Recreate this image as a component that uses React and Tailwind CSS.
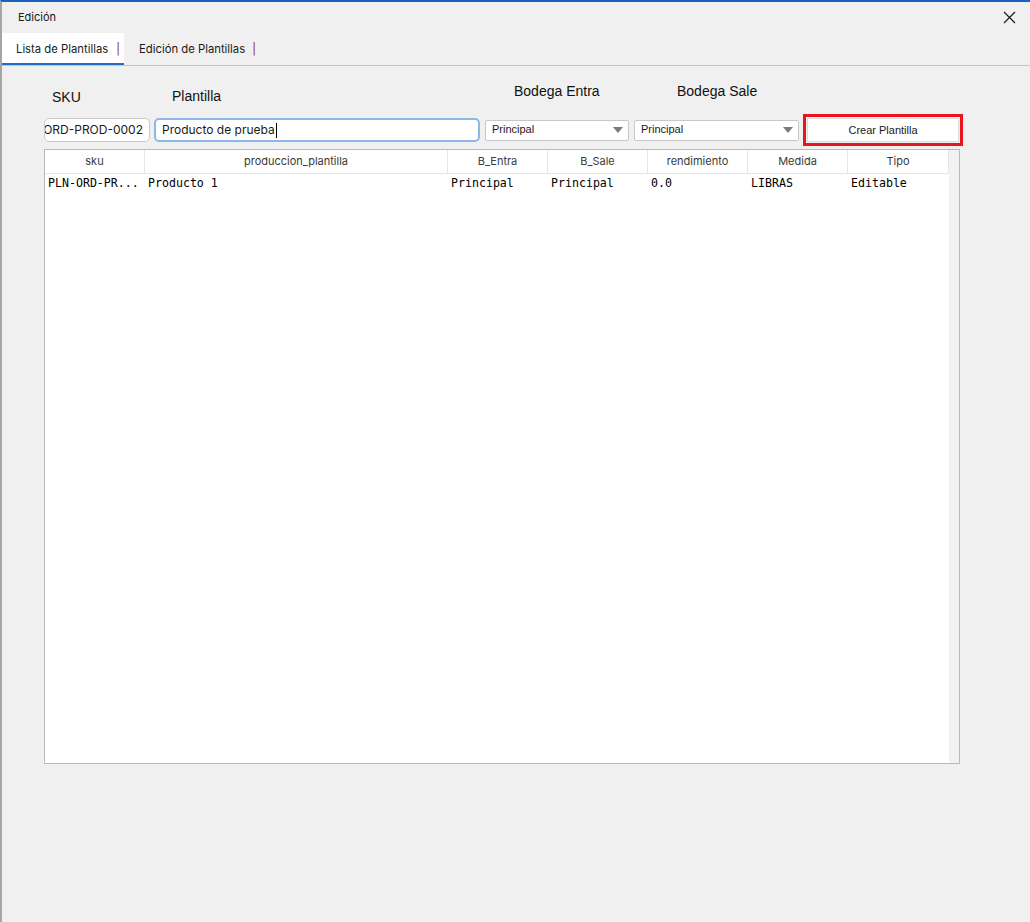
import React from "react";

const columnas = [
  { key: "sku", label: "sku", w: "w-[100px]" },
  { key: "plantilla", label: "produccion_plantilla", w: "w-[303px]" },
  { key: "entra", label: "B_Entra", w: "w-[100px]" },
  { key: "sale", label: "B_Sale", w: "w-[100px]" },
  { key: "rend", label: "rendimiento", w: "w-[100px]" },
  { key: "medida", label: "Medida", w: "w-[100px]" },
  { key: "tipo", label: "Tipo", w: "w-[101px]" },
];

const filas = [
  {
    sku: "PLN-ORD-PR...",
    plantilla: "Producto 1",
    entra: "Principal",
    sale: "Principal",
    rend: "0.0",
    medida: "LIBRAS",
    tipo: "Editable",
  },
];

function SelectBodega({ width }) {
  return (
    <div
      className={`${width} h-[21px] bg-white border border-[#c8c8c8] rounded-[2px] flex items-center justify-between pl-[6px] pr-[5px] pb-px text-[11px] text-[#1a1a1a]`}
      style={{ fontFamily: '"Liberation Sans", Arial, sans-serif' }}
    >
      <span>Principal</span>
      <svg width="10" height="6" viewBox="0 0 10 6">
        <path d="M0 0 L10 0 L5 6 Z" fill="#7a7a7a" />
      </svg>
    </div>
  );
}

export default function App() {
  const ui = { fontFamily: 'Inter, "Open Sans", sans-serif' };
  const arial = { fontFamily: '"Liberation Sans", Arial, sans-serif' };
  const mono = { fontFamily: '"DejaVu Sans Mono", "Liberation Mono", monospace' };

  return (
    <div className="w-[1030px] h-[922px] bg-[#f0f0f0] border-t-2 border-[#1a62c0] border-l-2 border-l-[#a5a5a5] flex flex-col overflow-hidden">
      {/* barra de titulo */}
      <div className="h-[31px] flex items-center justify-between pl-4 pr-[14px]" style={ui}>
        <span className="text-[11px] text-[#1a1a1a]">Edición</span>
        <svg width="13" height="13" viewBox="0 0 13 13">
          <path d="M1 1 L12 12 M12 1 L1 12" stroke="#1a1a1a" strokeWidth="1.2" />
        </svg>
      </div>

      {/* tabs */}
      <div className="h-[33px] flex items-stretch border-b border-[#c4c4c4]" style={ui}>
        <div className="w-[122px] bg-white border-b-2 border-[#1f6fc8] flex items-center pl-[14px] pt-[2px] text-[11.3px] text-[#1a1a1a]">
          Lista de Plantillas <span className="ml-[8px] text-[#8c1d2e]">|</span>
        </div>
        <div className="flex items-center pl-[15px] text-[11.3px] text-[#1a1a1a]">
          Edición de Plantillas <span className="ml-[7px] text-[#8c1d2e]">|</span>
        </div>
      </div>

      {/* contenido */}
      <div className="pl-[42px] flex flex-col">
        <div className="h-[48px] flex text-[14px] text-[#111111]" style={arial}>
          <div className="w-[110px] pl-2 pt-[21px]">SKU</div>
          <div className="w-[331px] pl-[18px] pt-[20px]">Plantilla</div>
          <div className="w-[149px] pl-[29px] pt-[15px]">Bodega Entra</div>
          <div className="w-[169px] pl-[43px] pt-[15px]">Bodega Sale</div>
        </div>

        <div className="h-[32px] flex items-center">
          <div
            className="w-[106px] h-[24px] bg-white border border-[#c9c9c9] rounded-[5px] flex items-center justify-end pr-[6px] overflow-hidden whitespace-nowrap text-[12px] text-[#1a1a1a]"
            style={ui}
          >
            ORD-PROD-0002
          </div>
          <div
            className="ml-[4px] w-[326px] h-[24px] bg-white border-2 border-[#8bb8e8] rounded-[5px] flex items-center pl-[6px] text-[12px] text-[#1a1a1a]"
            style={ui}
          >
            Producto de prueba
            <span className="w-px h-[15px] bg-black ml-px" />
          </div>
          <div className="ml-[5px]">
            <SelectBodega width="w-[144px]" />
          </div>
          <div className="ml-[5px]">
            <SelectBodega width="w-[165px]" />
          </div>
          <div className="ml-[4px] w-[160px] h-[32px] border-[3px] border-[#e8141e] p-[1px]">
            <button
              className="w-full h-full bg-white border border-[#dcdcdc] flex items-center justify-center text-[11px] text-[#1a1a1a]"
              style={arial}
            >
              Crear Plantilla
            </button>
          </div>
        </div>

        {/* tabla */}
        <div className="mt-[3px] w-[916px] h-[615px] border border-[#b9b9b9] bg-white flex">
          <div className="w-[904px] flex flex-col">
            <div className="h-[24px] flex border-b border-[#e6e6e6]" style={ui}>
              {columnas.map((c) => (
                <div
                  key={c.key}
                  className={`${c.w} flex items-center justify-center border-r border-[#e6e6e6] text-[11px] text-[#3a3a3a]`}
                >
                  {c.label}
                </div>
              ))}
            </div>
            {filas.map((f, i) => (
              <div key={i} className="h-[19px] flex" style={mono}>
                {columnas.map((c) => (
                  <div
                    key={c.key}
                    className={`${c.w} flex items-center pl-[3px] text-[11.6px] text-black whitespace-nowrap`}
                  >
                    {f[c.key]}
                  </div>
                ))}
              </div>
            ))}
          </div>
          <div className="flex-1 bg-[#f2f2f2]" />
        </div>
      </div>
    </div>
  );
}
